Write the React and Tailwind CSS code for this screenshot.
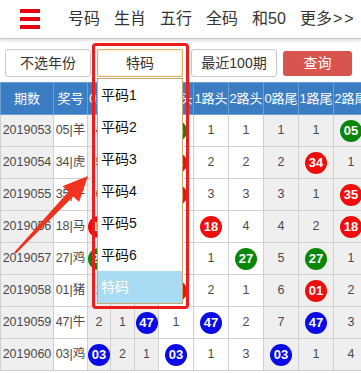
import React from 'react'

const FONT = { fontFamily: '"Liberation Sans", "Noto Sans CJK SC", sans-serif' }

const G = '#0a870a'
const R = '#f20d0d'
const B = '#0a0ae6'

const b = (n, c) => ({ n, c })

// 期数, 奖号, 0路, 1路, 2路, 0路头, 1路头, 2路头, 0路尾, 1路尾, 2路尾
const rows = [
  ['2019053', '05|羊', 4, 2, b('05', G), b('05', G), 1, 1, 1, 1, b('05', G)],
  ['2019054', '34|虎', 5, b('34', R), 1, b('34', R), 2, 2, 2, b('34', R), 1],
  ['2019055', '35|牛', 6, 1, b('35', R), b('35', R), 3, 3, 3, 1, b('35', R)],
  ['2019056', '18|马', b('18', R), 2, 1, 1, b('18', R), 4, 4, 2, b('18', R)],
  ['2019057', '27|鸡', b('27', G), 3, 2, 2, 1, b('27', G), 5, b('27', G), 1],
  ['2019058', '01|猪', 1, b('01', R), 3, b('01', R), 2, 1, 6, b('01', R), 2],
  ['2019059', '47|牛', 2, 1, b('47', B), 1, b('47', B), 2, 7, b('47', B), 3],
  ['2019060', '03|鸡', b('03', B), 2, 1, b('03', B), 1, 3, b('03', B), 1, 4],
]

const heads = ['期数', '奖号', '0路', '1路', '2路', '0路头', '1路头', '2路头', '0路尾', '1路尾', '2路尾']
const widths = [53, 34, 23, 24, 24, 35, 35, 35, 35, 35, 35]
// shaded column groups
const shaded = [true, false, true, true, true, false, false, false, true, true, true]

function Ball({ n, c }) {
  return (
    <span
      className="inline-flex items-center justify-center w-[22px] h-[22px] rounded-full text-white text-[13px] font-bold leading-none"
      style={{ backgroundColor: c }}
    >
      {n}
    </span>
  )
}

function Nav() {
  return (
    <div className="h-[39px] flex items-center border-b border-[#c9c9c9] shadow-[0_2px_2px_rgba(0,0,0,0.12)] bg-white">
      <div className="ml-[20px] w-[20px] flex flex-col gap-[4px]">
        <span className="h-[4px] bg-[#e60012]" />
        <span className="h-[4px] bg-[#e60012]" />
        <span className="h-[4px] bg-[#e60012]" />
      </div>
      <div className="ml-[28px] flex gap-[14px] text-[16px] text-[#333] leading-none">
        <span>号码</span>
        <span>生肖</span>
        <span>五行</span>
        <span>全码</span>
        <span>和50</span>
        <span>更多<span className="tracking-[2px] ml-[1px]">&gt;&gt;</span></span>
      </div>
    </div>
  )
}

function Filters() {
  return (
    <div className="mt-[10px] flex items-center pl-[5px] gap-[6px] text-[14px] text-[#333]">
      <div className="w-[86px] h-[28px] flex items-center justify-center border border-[#c8c8c8] rounded-[3px] bg-white">不选年份</div>
      <div className="w-[86px] h-[28px] flex items-center justify-center border border-[#dcae62] rounded-[2px] bg-white shadow-[inset_0_0_2px_rgba(220,170,90,0.6)]">特码</div>
      <div className="ml-[2px] w-[86px] h-[28px] flex items-center justify-center border border-[#c8c8c8] rounded-[3px] bg-white">最近100期</div>
      <div className="w-[69px] h-[25px] flex items-center justify-center rounded-[3px] bg-[#d9534f] text-white">查询</div>
    </div>
  )
}

function Table() {
  return (
    <div className="mt-[5px] overflow-hidden">
      <table className="table-fixed border-collapse w-[368px] text-[12.5px] text-[#4a4a4a]">
        <colgroup>
          {widths.map((w, i) => (
            <col key={i} style={{ width: w }} />
          ))}
        </colgroup>
        <thead>
          <tr className="h-[32px] bg-[#3b7dc2] text-white">
            {heads.map((h, i) => (
              <th key={i} className="border border-[#6d9fd3] font-normal text-[13px] whitespace-nowrap p-0">
                {h}
              </th>
            ))}
          </tr>
        </thead>
        <tbody>
          {rows.map((r, ri) => (
            <tr key={ri} className="h-[32px]">
              {r.map((v, ci) => (
                <td
                  key={ci}
                  className={`border border-[#d0d0d0] text-center p-0 whitespace-nowrap ${shaded[ci] ? 'bg-[#efefef]' : 'bg-white'}`}
                >
                  {typeof v === 'object' ? <Ball {...v} /> : v}
                </td>
              ))}
            </tr>
          ))}
        </tbody>
      </table>
    </div>
  )
}

function Dropdown() {
  const items = ['平码1', '平码2', '平码3', '平码4', '平码5', '平码6']
  return (
    <div className="absolute left-[97px] top-[78px] w-[86px] bg-white border border-[#c9a66b] text-[14px] text-[#111]">
      {items.map((t) => (
        <div key={t} className="h-[32px] flex items-center pl-[3px]">
          {t}
        </div>
      ))}
      <div className="h-[32px] flex items-center pl-[3px] bg-[#a9dcf2] text-white">特码</div>
    </div>
  )
}

function Arrow() {
  return (
    <svg className="absolute left-0 top-0" width="120" height="280" viewBox="0 0 120 280">
      <polygon
        points="14.3,252.3 68.3,191.8 62.5,186.3 88,176 79.1,202.1 73.3,196.6 15.7,253.7"
        fill="#f0321f"
      />
    </svg>
  )
}

export default function App() {
  return (
    <div className="relative w-[361px] h-[373px] overflow-hidden bg-white" style={FONT}>
      <Nav />
      <Filters />
      <Table />
      <Dropdown />
      <div className="absolute left-[92px] top-[43px] w-[97px] h-[266px] border-[3px] border-[#ee1c1c] rounded-[4px]" />
      <Arrow />
    </div>
  )
}
